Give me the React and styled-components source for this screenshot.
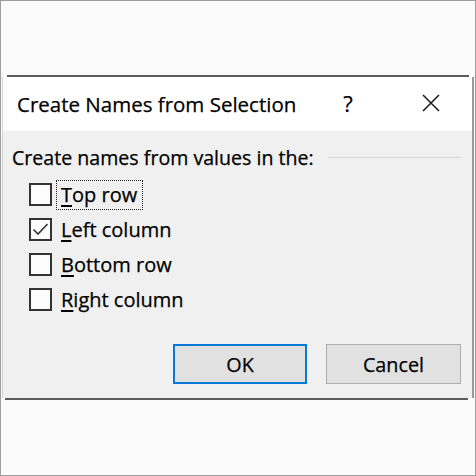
import React from "react";
import styled, { createGlobalStyle } from "styled-components";

const GlobalStyle = createGlobalStyle`
  html, body { margin: 0; padding: 0; background: #fbfbfb; }
  * { box-sizing: border-box; }
`;

const Frame = styled.div`
  width: 476px;
  height: 476px;
  border: 1px solid #9e9e9e;
  background: #fbfbfb;
  padding-top: 74px;
  display: flex;
  flex-direction: column;
  font-family: "Open Sans", "Noto Sans", sans-serif;
  color: #000;
  -webkit-text-stroke: 0.25px #000;
`;

const Rule = styled.div`
  height: 2px;
  background: #5c5c5c;
  margin-left: ${(p) => p.$left}px;
  width: ${(p) => p.$width}px;
`;

const Dialog = styled.div`
  margin: 0 1px;
  border-left: 1px solid #d4d4d4;
  border-right: 2px solid #9a9a9a;
  display: flex;
  flex-direction: column;
`;

const TitleBar = styled.div`
  height: 54px;
  background: #ffffff;
  display: flex;
  align-items: center;
  padding-left: 14px;
`;

const Title = styled.div`
  font-size: 20.5px;
  flex: 1;
  margin-top: -1px;
`;

const Help = styled.div`
  font-size: 22px;
  width: 30px;
  text-align: center;
  margin-right: 58px;
  margin-top: -2px;
`;

const CloseIcon = styled.svg`
  width: 20px;
  height: 20px;
  margin-right: 31px;
  margin-top: -2px;
`;

const Body = styled.div`
  height: 267px;
  background: #f0f0f0;
  display: flex;
  flex-direction: column;
  padding: 14px 11px 14px 9px;
`;

const GroupHeading = styled.div`
  display: flex;
  align-items: center;
  gap: 14px;
  font-size: 19.6px;
  line-height: 26px;
`;

const GroupLine = styled.div`
  flex: 1;
  height: 1px;
  background: #d6d6d6;
  margin-top: -1px;
`;

const List = styled.div`
  display: flex;
  flex-direction: column;
  padding-left: 17px;
  margin-top: 6px;
`;

const Row = styled.div`
  height: 35px;
  display: flex;
  align-items: center;
  gap: 4px;
`;

const Box = styled.div`
  width: 23px;
  height: 23px;
  border: 2px solid #333333;
  background: #fcfcfc;
  display: flex;
  align-items: center;
  justify-content: center;
`;

const Label = styled.div`
  font-size: 20px;
  line-height: 28px;
  height: 30px;
  padding: 0 5px 0 4px;
  border: 1px dotted ${(p) => (p.$focused ? "#222" : "transparent")};
  display: flex;
  align-items: center;
  u { text-decoration-thickness: 1.5px; text-underline-offset: 3px; }
`;

const Buttons = styled.div`
  margin-top: auto;
  display: flex;
  justify-content: flex-end;
  gap: 19px;
`;

const Button = styled.button`
  width: ${(p) => p.$w}px;
  height: 40px;
  background: #e1e1e1;
  border: ${(p) => (p.$default ? "2px solid #0a78d7" : "1px solid #adadad")};
  font-family: "Open Sans", "Noto Sans", sans-serif;
  font-size: 19.8px;
  color: #000;
  -webkit-text-stroke: 0.25px #000;
  padding: 0;
  display: flex;
  align-items: center;
  justify-content: center;
`;

const items = [
  { key: "T", rest: "op row", checked: false, focused: true },
  { key: "L", rest: "eft column", checked: true },
  { key: "B", rest: "ottom row", checked: false },
  { key: "R", rest: "ight column", checked: false },
];

export default function App() {
  return (
    <>
      <GlobalStyle />
      <Frame>
        <Rule $left={6} $width={462} />
        <Dialog>
          <TitleBar>
            <Title>Create Names from Selection</Title>
            <Help>?</Help>
            <CloseIcon viewBox="0 0 20 20">
              <path d="M2 2 L18 18 M18 2 L2 18" stroke="#1e1e1e" strokeWidth="1.6" fill="none" />
            </CloseIcon>
          </TitleBar>
          <Body>
            <GroupHeading>
              <span>Create names from values in the:</span>
              <GroupLine />
            </GroupHeading>
            <List>
              {items.map((it) => (
                <Row key={it.key}>
                  <Box>
                    {it.checked && (
                      <svg width="17" height="17" viewBox="0 0 17 17">
                        <path d="M1.5 8.5 L6 13 L15.5 3" stroke="#333" strokeWidth="1.6" fill="none" />
                      </svg>
                    )}
                  </Box>
                  <Label $focused={it.focused}>
                    <span>
                      <u>{it.key}</u>
                      {it.rest}
                    </span>
                  </Label>
                </Row>
              ))}
            </List>
            <Buttons>
              <Button $default $w={134}>OK</Button>
              <Button $w={135}>Cancel</Button>
            </Buttons>
          </Body>
        </Dialog>
        <Rule $left={4} $width={463} />
      </Frame>
    </>
  );
}
